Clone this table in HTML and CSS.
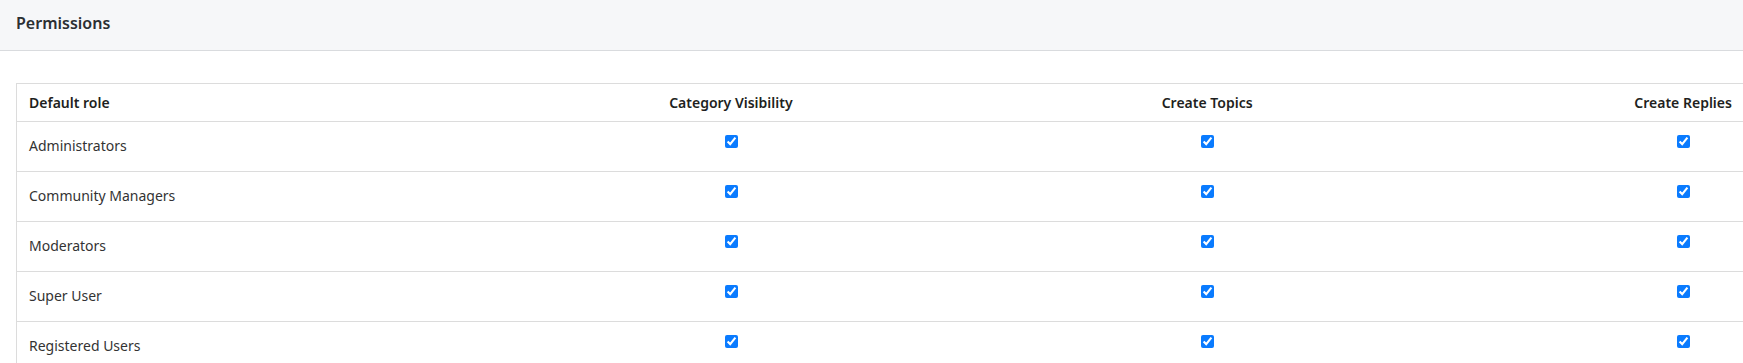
FILE: index.html
```html
<!DOCTYPE html>
<html lang="en">
<head>
<meta charset="utf-8">
<title>Permissions</title>
<link rel="stylesheet" href="styles.css">
</head>
<body>
<div class="page">
  <header class="panel-head">
    <h2 class="panel-title">Permissions</h2>
  </header>
  <section class="panel-body">
    <table class="perm-table">
      <thead>
        <tr>
          <th class="role-col">Default role</th>
          <th>Category Visibility</th>
          <th>Create Topics</th>
          <th>Create Replies</th>
        </tr>
      </thead>
      <tbody>
        <tr>
          <td class="role-col">Administrators</td>
          <td><input type="checkbox" checked></td>
          <td><input type="checkbox" checked></td>
          <td><input type="checkbox" checked></td>
        </tr>
        <tr>
          <td class="role-col">Community Managers</td>
          <td><input type="checkbox" checked></td>
          <td><input type="checkbox" checked></td>
          <td><input type="checkbox" checked></td>
        </tr>
        <tr>
          <td class="role-col">Moderators</td>
          <td><input type="checkbox" checked></td>
          <td><input type="checkbox" checked></td>
          <td><input type="checkbox" checked></td>
        </tr>
        <tr>
          <td class="role-col">Super User</td>
          <td><input type="checkbox" checked></td>
          <td><input type="checkbox" checked></td>
          <td><input type="checkbox" checked></td>
        </tr>
        <tr>
          <td class="role-col">Registered Users</td>
          <td><input type="checkbox" checked></td>
          <td><input type="checkbox" checked></td>
          <td><input type="checkbox" checked></td>
        </tr>
      </tbody>
    </table>
  </section>
</div>
</body>
</html>
```
FILE: styles.css
```css
html, body {
  margin: 0;
  padding: 0;
  background: #ffffff;
}

body {
  font-family: "Noto Sans", "Open Sans", "Liberation Sans", sans-serif;
  color: #333333;
  overflow: hidden;
}

.page {
  width: 100%;
  overflow: hidden;
}

.panel-head {
  height: 51px;
  box-sizing: border-box;
  padding: 11px 16px 0;
  background: #f6f7f9;
  border-bottom: 1px solid #d9dbde;
}

.panel-title {
  margin: 0;
  font-size: 16px;
  line-height: 24px;
  font-weight: 600;
  color: #2b2f33;
}

.panel-body {
  padding: 32px 16px 0;
}

.perm-table {
  width: 1906px;
  table-layout: fixed;
  border-collapse: collapse;
  border: 1px solid #dcdcdc;
  font-size: 14px;
}

.perm-table th,
.perm-table td {
  text-align: center;
  padding: 12px 12px 13px;
  line-height: 24px;
  border-bottom: 1px solid #dcdcdc;
  vertical-align: top;
}

.perm-table th {
  padding: 7px 12px 6px;
  font-weight: 600;
  color: #1e1f21;
}

.perm-table .role-col {
  text-align: left;
}

.perm-table td input {
  margin: 1px 3px 0 4px;
  vertical-align: top;
  accent-color: #0a7bff;
}
```
